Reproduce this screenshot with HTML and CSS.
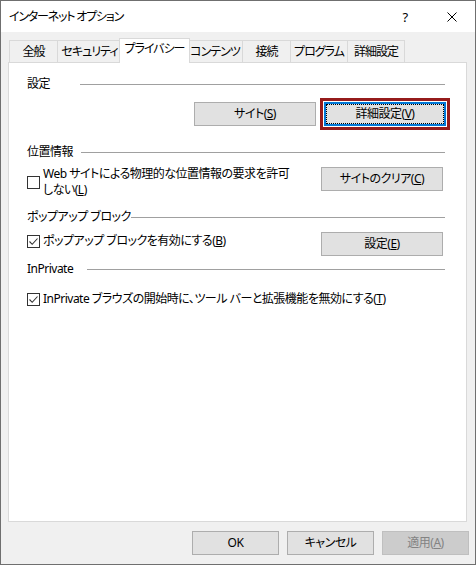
FILE: index.html
```html
<!DOCTYPE html>
<html lang="ja">
<head>
<meta charset="utf-8">
<title>インターネット オプション</title>
<link rel="stylesheet" href="styles.css">
</head>
<body>
<div class="window">
  <div class="titlebar">
    <span class="title">インターネット オプション</span>
    <div class="title-buttons">
      <span class="tbtn help">?</span>
      <span class="tbtn close">
        <svg width="10" height="10" viewBox="0 0 10 10"><path d="M0.5 0.5 L9.5 9.5 M9.5 0.5 L0.5 9.5" stroke="#000" stroke-width="1" fill="none"/></svg>
      </span>
    </div>
  </div>
  <div class="body">
    <div class="tabs">
      <div class="tab t1">全般</div>
      <div class="tab t2">セキュリティ</div>
      <div class="tab t3 selected">プライバシー</div>
      <div class="tab t4">コンテンツ</div>
      <div class="tab t5">接続</div>
      <div class="tab t6">プログラム</div>
      <div class="tab t7">詳細設定</div>
    </div>
    <div class="panel">
      <div class="group-head">
        <span class="group-title gt1">設定</span>
        <span class="rule"></span>
      </div>
      <div class="row row-settings">
        <button class="btn">サイト(<u>S</u>)</button>
        <div class="highlight">
          <button class="btn focused">詳細設定(<u>V</u>)</button>
        </div>
      </div>

      <div class="group-head gh2">
        <span class="group-title gt2">位置情報</span>
        <span class="rule"></span>
      </div>
      <div class="row row-location">
        <label class="check multiline">
          <span class="box"></span>
          <span class="check-text">
            <span class="line">Web サイトによる物理的な位置情報の要求を許可</span>
            <span class="line">しない(<u>L</u>)</span>
          </span>
        </label>
        <button class="btn side">サイトのクリア(<u>C</u>)</button>
      </div>

      <div class="group-head gh3">
        <span class="group-title gt3">ポップアップ ブロック</span>
        <span class="rule"></span>
      </div>
      <div class="row row-popup">
        <label class="check single">
          <span class="box checked"><svg width="11" height="11" viewBox="0 0 11 11"><path d="M1.5 5.5 L4.2 8.3 L9.5 2.5" stroke="#333" stroke-width="1.1" fill="none"/></svg></span>
          <span class="check-text">ポップアップ ブロックを有効にする(<u>B</u>)</span>
        </label>
        <button class="btn side">設定(<u>E</u>)</button>
      </div>

      <div class="group-head gh4">
        <span class="group-title gt4">InPrivate</span>
        <span class="rule"></span>
      </div>
      <div class="row row-inprivate">
        <label class="check single">
          <span class="box checked"><svg width="11" height="11" viewBox="0 0 11 11"><path d="M1.5 5.5 L4.2 8.3 L9.5 2.5" stroke="#333" stroke-width="1.1" fill="none"/></svg></span>
          <span class="check-text">InPrivate ブラウズの開始時に、ツール バーと拡張機能を無効にする(<u>T</u>)</span>
        </label>
      </div>
    </div>
    <div class="footer">
      <button class="btn fbtn">OK</button>
      <button class="btn fbtn">キャンセル</button>
      <button class="btn fbtn disabled">適用(<u>A</u>)</button>
    </div>
  </div>
</div>
</body>
</html>
```
FILE: styles.css
```css
* { box-sizing: border-box; }
html, body { margin: 0; padding: 0; background: #ffffff; }
body {
  font-family: "Noto Sans", "Noto Sans CJK JP", sans-serif;
  font-size: 12px;
  letter-spacing: -0.5px;
  color: #000;
  font-feature-settings: "palt";
}
.window {
  width: 476px;
  height: 565px;
  border: 1px solid #6f6f6f;
  background: #f0f0f0;
  display: flex;
  flex-direction: column;
}
.titlebar {
  height: 31px;
  flex: none;
  background: #ffffff;
  display: flex;
  align-items: center;
  padding-left: 8px;
}
.title { flex: 1; line-height: 16px; letter-spacing: -1.2px; }
.title-buttons { display: flex; height: 31px; }
.tbtn {
  width: 46px;
  height: 31px;
  display: flex;
  align-items: center;
  justify-content: center;
}
.help { font-size: 13px; padding-right: 2px; }
.close svg { display: block; }

.body {
  flex: 1;
  display: flex;
  flex-direction: column;
  padding: 6px 6px 0 7px;
}
.tabs {
  display: flex;
  align-items: flex-end;
  height: 24px;
  padding-left: 1px;
}
.tab {
  height: 22px;
  line-height: 21px;
  border: 1px solid #d9d9d9;
  border-bottom: none;
  background: #f0f0f0;
  text-align: center;
  margin-right: -1px;
  white-space: nowrap;
  letter-spacing: -1px;
}
.t1 { width: 49px; }
.t2 { width: 65px; }
.t3 { width: 67px; }
.t4 { width: 56px; }
.t5 { width: 49px; }
.t6 { width: 58px; }
.t7 { width: 58px; }
.tab.selected {
  position: relative;
  z-index: 1;
  height: 25px;
  line-height: 19px;
  background: #ffffff;
  margin: 0 -3px -1px -2px;
  width: 71px;
}
.panel {
  width: 459px;
  height: 460px;
  background: #ffffff;
  border: 1px solid #d9d9d9;
  padding: 13px 21px 0 18px;
  display: flex;
  flex-direction: column;
}
.group-head {
  display: flex;
  align-items: center;
  height: 16px;
  line-height: 16px;
}
.group-title { white-space: nowrap; flex: none; }
.gt1 { width: 53px; }
.gt2 { width: 54px; }
.gt3 { width: 104px; }
.gt4 { width: 60px; }
.rule {
  flex: 1;
  height: 1px;
  background: #a0a0a0;
}
.gh2 { margin-top: 14px; }
.gh3 { margin-top: 11px; }
.gh4 { margin-top: 5px; }

.row { display: flex; }
.row-settings {
  margin-top: 6px;
  justify-content: flex-end;
  align-items: center;
  gap: 4px;
  margin-right: -5px;
}
.row-location {
  margin-top: 7px;
  justify-content: space-between;
  align-items: flex-start;
  margin-right: 2px;
}
.row-popup {
  margin-top: 7px;
  justify-content: space-between;
  align-items: flex-start;
  margin-right: 2px;
}
.row-inprivate { margin-top: 13px; }

.btn {
  font: inherit;
  letter-spacing: -0.5px;
  color: #000;
  height: 24px;
  width: 122px;
  padding: 0;
  background: #e1e1e1;
  border: 1px solid #adadad;
  line-height: 20px;
  text-align: center;
  white-space: nowrap;
}
.btn u { text-underline-offset: 1px; }
.highlight {
  border: 3px solid #951b1b;
  padding: 1px;
  background: #ffffff;
}
.btn.focused {
  display: block;
  border: 2px solid #0078d7;
  outline: 1px dotted #000;
  outline-offset: -3px;
}

.check {
  display: flex;
  align-items: center;
  gap: 3px;
}
.check.multiline { margin-top: -1px; }
.check.single { line-height: 16px; margin-top: 1px; }
.check-text .line { display: block; line-height: 16px; }
.box {
  width: 13px;
  height: 13px;
  flex: none;
  border: 1px solid #333;
  background: #fff;
  display: flex;
  align-items: center;
  justify-content: center;
}
.box svg { display: block; }
.check-text { white-space: nowrap; }

.footer {
  display: flex;
  justify-content: flex-end;
  gap: 8px;
  margin-top: 9px;
}
.fbtn { width: 87px; }
.btn.disabled {
  background: #cccccc;
  border-color: #bfbfbf;
  color: #838383;
}
```
